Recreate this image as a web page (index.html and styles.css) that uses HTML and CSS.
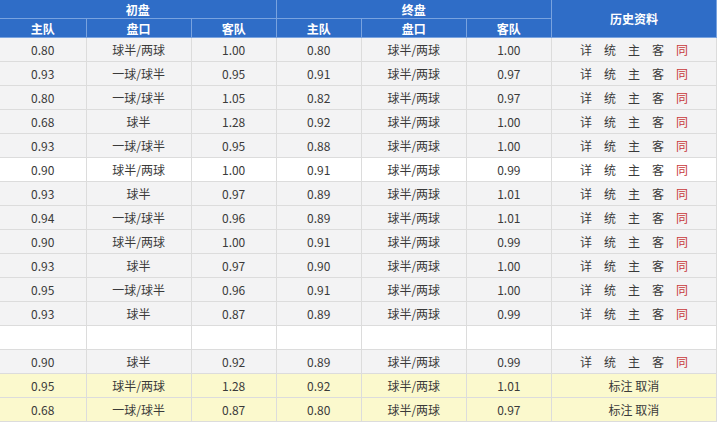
FILE: index.html
```html
<!DOCTYPE html>
<html lang="zh-CN">
<head>
<meta charset="utf-8">
<link rel="stylesheet" href="styles.css">
</head>
<body>
<table class="odds">
  <colgroup>
    <col class="c-num"><col class="c-line"><col class="c-num">
    <col class="c-num"><col class="c-line"><col class="c-num">
    <col class="c-hist">
  </colgroup>
  <thead>
    <tr class="h1">
      <th colspan="3">初盘</th>
      <th colspan="3">终盘</th>
      <th rowspan="2">历史资料</th>
    </tr>
    <tr class="h2">
      <th>主队</th><th>盘口</th><th>客队</th>
      <th>主队</th><th>盘口</th><th>客队</th>
    </tr>
  </thead>
  <tbody>
    <tr><td>0.80</td><td>球半/两球</td><td>1.00</td><td>0.80</td><td>球半/两球</td><td>1.00</td><td class="links"><span>详</span><span>统</span><span>主</span><span>客</span><span class="red">同</span></td></tr>
    <tr><td>0.93</td><td>一球/球半</td><td>0.95</td><td>0.91</td><td>球半/两球</td><td>0.97</td><td class="links"><span>详</span><span>统</span><span>主</span><span>客</span><span class="red">同</span></td></tr>
    <tr><td>0.80</td><td>一球/球半</td><td>1.05</td><td>0.82</td><td>球半/两球</td><td>0.97</td><td class="links"><span>详</span><span>统</span><span>主</span><span>客</span><span class="red">同</span></td></tr>
    <tr><td>0.68</td><td>球半</td><td>1.28</td><td>0.92</td><td>球半/两球</td><td>1.00</td><td class="links"><span>详</span><span>统</span><span>主</span><span>客</span><span class="red">同</span></td></tr>
    <tr><td>0.93</td><td>一球/球半</td><td>0.95</td><td>0.88</td><td>球半/两球</td><td>1.00</td><td class="links"><span>详</span><span>统</span><span>主</span><span>客</span><span class="red">同</span></td></tr>
    <tr class="white"><td>0.90</td><td>球半/两球</td><td>1.00</td><td>0.91</td><td>球半/两球</td><td>0.99</td><td class="links"><span>详</span><span>统</span><span>主</span><span>客</span><span class="red">同</span></td></tr>
    <tr><td>0.93</td><td>球半</td><td>0.97</td><td>0.89</td><td>球半/两球</td><td>1.01</td><td class="links"><span>详</span><span>统</span><span>主</span><span>客</span><span class="red">同</span></td></tr>
    <tr><td>0.94</td><td>一球/球半</td><td>0.96</td><td>0.89</td><td>球半/两球</td><td>1.01</td><td class="links"><span>详</span><span>统</span><span>主</span><span>客</span><span class="red">同</span></td></tr>
    <tr><td>0.90</td><td>球半/两球</td><td>1.00</td><td>0.91</td><td>球半/两球</td><td>0.99</td><td class="links"><span>详</span><span>统</span><span>主</span><span>客</span><span class="red">同</span></td></tr>
    <tr><td>0.93</td><td>球半</td><td>0.97</td><td>0.90</td><td>球半/两球</td><td>1.00</td><td class="links"><span>详</span><span>统</span><span>主</span><span>客</span><span class="red">同</span></td></tr>
    <tr><td>0.95</td><td>一球/球半</td><td>0.96</td><td>0.91</td><td>球半/两球</td><td>1.00</td><td class="links"><span>详</span><span>统</span><span>主</span><span>客</span><span class="red">同</span></td></tr>
    <tr><td>0.93</td><td>球半</td><td>0.87</td><td>0.89</td><td>球半/两球</td><td>0.99</td><td class="links"><span>详</span><span>统</span><span>主</span><span>客</span><span class="red">同</span></td></tr>
    <tr class="white"><td></td><td></td><td></td><td></td><td></td><td></td><td></td></tr>
    <tr><td>0.90</td><td>球半</td><td>0.92</td><td>0.89</td><td>球半/两球</td><td>0.99</td><td class="links"><span>详</span><span>统</span><span>主</span><span>客</span><span class="red">同</span></td></tr>
    <tr class="yellow"><td>0.95</td><td>球半/两球</td><td>1.28</td><td>0.92</td><td>球半/两球</td><td>1.01</td><td class="mark">标注 取消</td></tr>
    <tr class="yellow"><td>0.68</td><td>一球/球半</td><td>0.87</td><td>0.80</td><td>球半/两球</td><td>0.97</td><td class="mark">标注 取消</td></tr>
  </tbody>
</table>
</body>
</html>
```
FILE: styles.css
```css
html, body {
  margin: 0;
  padding: 0;
  background: #ffffff;
}
body {
  font-family: "Noto Sans CJK SC", "Noto Sans", sans-serif;
  font-size: 12px;
  color: #3a3a3a;
}
.odds {
  border-collapse: collapse;
  table-layout: fixed;
  width: 717px;
}
.c-num { width: 86px; }
.c-line { width: 105px; }
.c-hist { width: 165px; }
.odds col:nth-child(3) { width: 85px; }
.odds col:nth-child(4) { width: 85px; }
.odds col:nth-child(6) { width: 85px; }
.odds th {
  background: #2f6dc7;
  color: #ffffff;
  font-weight: bold;
  font-size: 12px;
  border: 1px solid #79a3df;
  padding: 0;
  text-align: center;
  line-height: 17px;
}
.odds thead tr:first-child th { border-top: none; }
.odds th:first-child { border-left: none; }
.h1 th { height: 18px; }
.h2 th { height: 18px; }
.odds td {
  background: #f3f3f4;
  border: 1px solid #dcdcdc;
  text-align: center;
  padding: 0;
  height: 23px;
  line-height: 23px;
  white-space: nowrap;
}
.odds td:first-child { border-left: none; }
.odds tr.white td { background: #ffffff; }
.odds tr.yellow td { background: #fbf9cd; }
.links span {
  display: inline-block;
  margin: 0 6px;
}
.links span.red { color: #c8383a; }
```
